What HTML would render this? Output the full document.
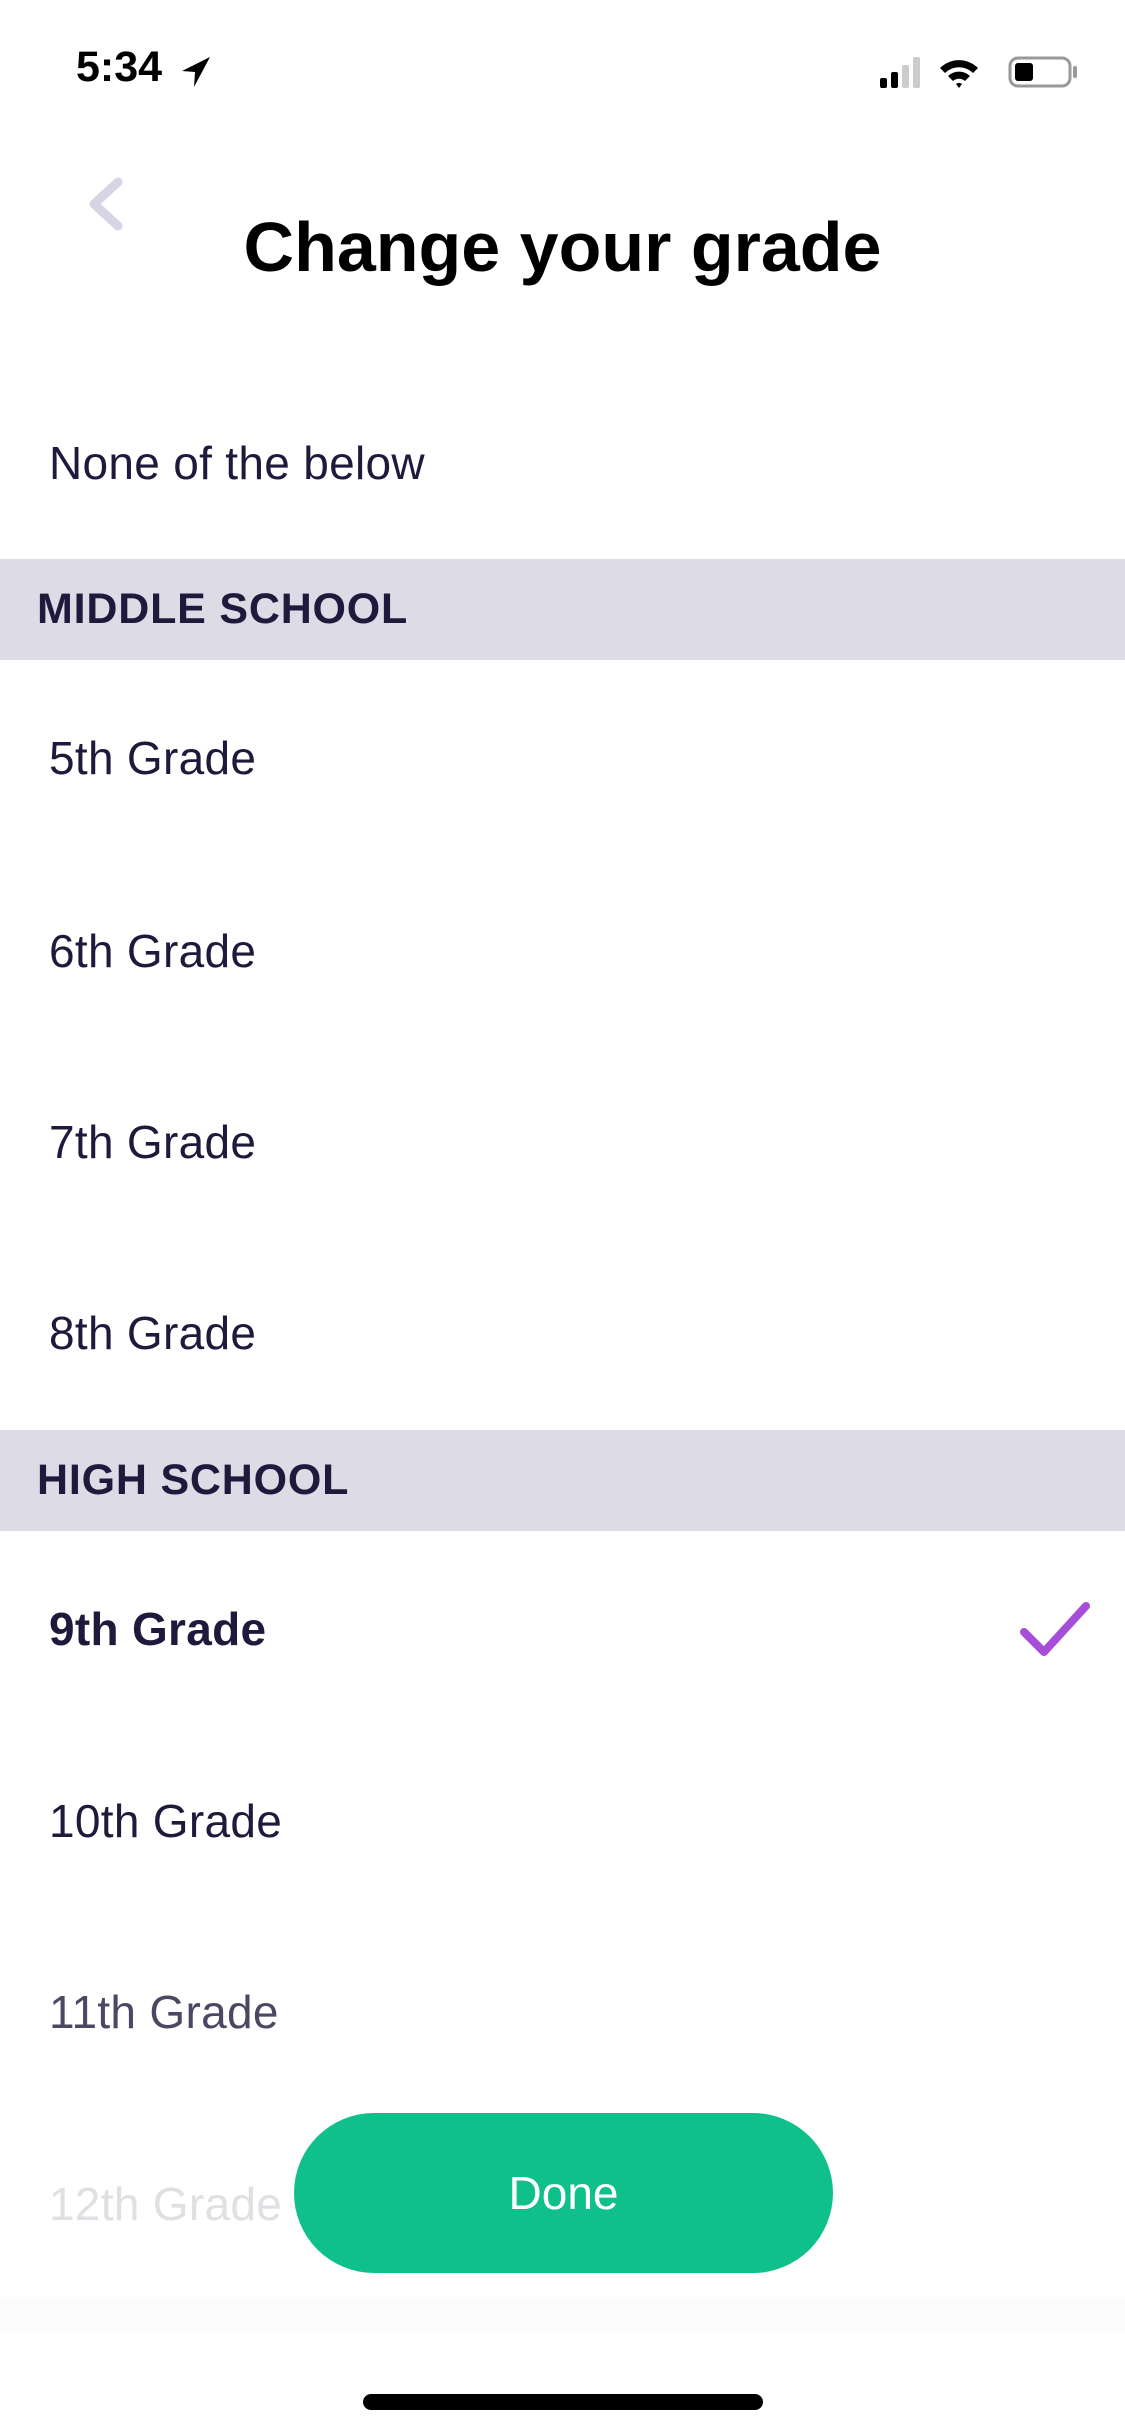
<!DOCTYPE html>
<html><head><meta charset="utf-8"><style>
*{margin:0;padding:0;box-sizing:border-box}
body{width:1125px;height:2436px;background:#fff;position:relative;overflow:hidden;font-family:"Liberation Sans",sans-serif;color:#1e1a3c}
.a{position:absolute}
.row{position:absolute;left:49px;font-size:46px;line-height:50px;letter-spacing:0.3px}
.band{position:absolute;left:0;width:1125px;height:101px;background:#dcdbe6}
.band span{position:absolute;left:37px;top:26px;font-size:43px;font-weight:bold;letter-spacing:0.8px;color:#1e1a3c}
</style></head><body>
<div class="a" style="left:76px;top:43px;font-size:43px;font-weight:bold;color:#000">5:34</div>
<svg class="a" style="left:180px;top:55px" width="32" height="34" viewBox="0 0 32 34"><path d="M30 2 L2 16 L15 17 L14 32 Z" fill="#000"/></svg>
<svg class="a" style="left:880px;top:52px" width="200" height="40" viewBox="0 0 200 40">
<rect x="0" y="26" width="7" height="10" rx="2" fill="#000"/><rect x="11" y="20" width="7" height="16" rx="2" fill="#000"/><rect x="22" y="13" width="7" height="23" rx="2" fill="#ccc"/><rect x="33" y="5" width="7" height="31" rx="2" fill="#ccc"/>
<path d="M60 16 A27 27 0 0 1 98 16 L93 21 A20 20 0 0 0 65 21 Z M68 24 A16 16 0 0 1 90 24 L85 29 A9 9 0 0 0 73 29 Z M76 32 A5 5 0 0 1 82 32 L79 36 Z" fill="#000"/>
<rect x="130" y="6" width="60" height="28" rx="8" fill="none" stroke="#999" stroke-width="3"/><rect x="135" y="11" width="18" height="18" rx="3" fill="#000"/><rect x="193" y="14" width="4" height="12" rx="2" fill="#999"/>
</svg>
<svg class="a" style="left:84px;top:176px" width="42" height="56" viewBox="0 0 42 56"><path d="M34 6 L10 28 L34 50" fill="none" stroke="#d6d5e4" stroke-width="9" stroke-linecap="round" stroke-linejoin="round"/></svg>
<div class="a" style="left:0;width:1125px;text-align:center;top:207px;font-size:70px;font-weight:bold;color:#000">Change your grade</div>
<div class="row" style="top:438px">None of the below</div>
<div class="band" style="top:559px"><span>MIDDLE SCHOOL</span></div>
<div class="row" style="top:733px">5th Grade</div>
<div class="row" style="top:926px">6th Grade</div>
<div class="row" style="top:1117px">7th Grade</div>
<div class="row" style="top:1308px">8th Grade</div>
<div class="band" style="top:1430px"><span>HIGH SCHOOL</span></div>
<div class="row" style="top:1604px;font-weight:bold">9th Grade</div>
<svg class="a" style="left:1018px;top:1598px" width="74" height="62" viewBox="0 0 74 62"><path d="M6 34 L26 54 L68 8" fill="none" stroke="#a64ed8" stroke-width="8" stroke-linecap="round" stroke-linejoin="round"/></svg>
<div class="row" style="top:1796px">10th Grade</div>
<div class="row" style="top:1987px;color:#4a4862">11th Grade</div>
<div class="row" style="top:2179px;color:#e0e0e4">12th Grade</div>
<div class="a" style="left:294px;top:2113px;width:539px;height:160px;border-radius:80px;background:#10c08a;color:#fff;font-size:46px;text-align:center;line-height:160px">Done</div>
<div class="a" style="left:0;top:2297px;width:1125px;height:34px;background:#fbfbfb"></div>
<div class="a" style="left:363px;top:2394px;width:400px;height:16px;border-radius:8px;background:#000"></div>
</body></html>
